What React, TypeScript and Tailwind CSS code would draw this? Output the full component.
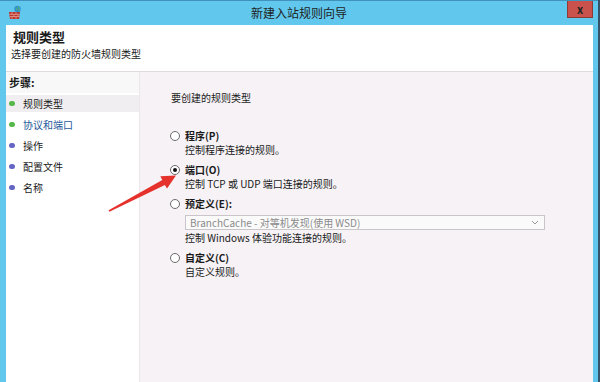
import React from "react";

const steps = [
    { label: "步骤:", header: true },
    { label: "规则类型", dot: "green", active: true },
    { label: "协议和端口", dot: "green", link: true },
    { label: "操作", dot: "purple" },
    { label: "配置文件", dot: "purple" },
    { label: "名称", dot: "purple" },
];

type Option = {
    label: string;
    desc: string;
    checked?: boolean;
    select?: string;
};

const options: Option[] = [
    { label: "程序(P)", desc: "控制程序连接的规则。" },
    { label: "端口(O)", desc: "控制 TCP 或 UDP 端口连接的规则。", checked: true },
    {
        label: "预定义(E):",
        desc: "控制 Windows 体验功能连接的规则。",
        select: "BranchCache - 对等机发现(使用 WSD)",
    },
    { label: "自定义(C)", desc: "自定义规则。" },
];

// firewall icon in the title bar
function WallIcon() {
    return (
        <svg width="14" height="15" viewBox="0 0 14 15">
            <path d="M1 7 L12 7 L11 14 L2 14 Z" fill="#b8332a" />
            <path d="M1.5 9.3 H11.6 M1.8 11.6 H11.3" stroke="#e9a79d" strokeWidth="0.8" />
            <path d="M4 7 V9.3 M8 7 V9.3 M6 9.3 V11.6 M10 9.3 V11.6 M4 11.6 V14 M8 11.6 V14" stroke="#e9a79d" strokeWidth="0.7" />
            <circle cx="9.5" cy="4" r="3.2" fill="#2f8fd0" />
            <path d="M7.8 2.6 Q9 3.6 8.6 5.2 M10.2 1.4 Q11.6 3 10.8 5.8" stroke="#5fc05a" strokeWidth="1" fill="none" />
        </svg>
    );
}

function Radio({ checked }: { checked?: boolean }) {
    return (
        <span className="flex h-[10px] w-[10px] shrink-0 items-center justify-center rounded-full border border-[#6b6b6b] bg-white">
            {checked && <span className="h-[4px] w-[4px] rounded-full bg-[#111]" />}
        </span>
    );
}

function OptionItem({ opt }: { opt: Option }) {
    return (
        <div className="flex flex-col">
            <div className="flex h-[14px] items-center gap-[5px]">
                <Radio checked={opt.checked} />
                <span className="font-bold leading-[14px]">{opt.label}</span>
            </div>
            {opt.select && (
                <div className="mt-[4px] ml-[15px] flex h-[15px] w-[360px] items-center justify-between border border-[#c9c6c9] bg-[#fbfafb] pl-[4px] pr-[5px] text-[#8a8a8a]">
                    <span className="leading-[13px]">{opt.select}</span>
                    <svg width="8" height="5" viewBox="0 0 8 5">
                        <path d="M1 1 L4 4 L7 1" stroke="#9a9a9a" strokeWidth="1" fill="none" />
                    </svg>
                </div>
            )}
            <div className={`${opt.select ? "mt-[1px]" : ""} ml-[15px] h-[14px] leading-[14px]`}>{opt.desc}</div>
        </div>
    );
}

// red annotation arrow drawn over the dialog
function Arrow() {
    return (
        <svg className="pointer-events-none absolute left-0 top-0" width="600" height="382">
            <polygon
                points="108.6,210.2 162.3,180 160.3,176.2 176,175.5 167,188.6 164.9,185 109.4,211.8"
                fill="#e5322c"
            />
        </svg>
    );
}

export default function App() {
    return (
        <div className="relative flex h-[382px] w-[600px] overflow-hidden bg-[#35536a] font-['Noto_Sans_CJK_SC',sans-serif] text-[10px] text-[#1a1a1a]">
            <div className="flex w-[598px] flex-col border-t border-[#3f93bd] bg-[#61c7ec]">
                {/* title bar */}
                <div className="grid h-[24px] grid-cols-[1fr_auto_1fr]">
                    <div className="flex items-center pl-[8px] pb-[2px]">
                        <WallIcon />
                    </div>
                    <div className="flex items-center text-[12px] text-[#1e1e1e]">新建入站规则向导</div>
                    <div className="flex items-start justify-end pr-[5px]">
                        <div className="flex h-[17px] w-[26px] items-center justify-center border border-[#8e3a36] border-t-0 bg-[#c9524c] text-[11px] font-bold leading-none text-[#222]">
                            x
                        </div>
                    </div>
                </div>

                <div className="flex flex-1 flex-col pl-[6px] pr-[5px]">
                    {/* header */}
                    <div className="h-[47px] border-b border-[#dedade] bg-white pt-[4px]">
                        <div className="pl-[7px] text-[13px] font-bold leading-[16px]">规则类型</div>
                        <div className="mt-[3px] pl-[5px] leading-[12px]">选择要创建的防火墙规则类型</div>
                    </div>

                    <div className="flex flex-1">
                        {/* steps */}
                        <div className="w-[134px] border-r border-[#ebe7eb] bg-white">
                            {steps.map((s) =>
                                s.header ? (
                                    <div
                                        key={s.label}
                                        className="flex h-[21px] items-center bg-[#f8f8f8] pl-[3px] text-[11px] font-bold"
                                    >
                                        {s.label}
                                    </div>
                                ) : (
                                    <div key={s.label} className="h-[21px] py-[2px]">
                                        <div
                                            className={`flex h-[17px] items-center gap-[8px] pl-[3px] ${s.active ? "bg-[#f1eef1]" : ""}`}
                                        >
                                            <span
                                                className={`h-[5px] w-[6px] rounded-full ${s.dot === "green" ? "bg-[#56b84a]" : "bg-[#6566c4]"}`}
                                            />
                                            <span className={s.link ? "text-[#1f5a9c]" : ""}>{s.label}</span>
                                        </div>
                                    </div>
                                )
                            )}
                        </div>

                        {/* rule type choices */}
                        <div className="flex-1 bg-[#f6f2f6] pt-[20px]">
                            <div className="pl-[31px] leading-[12px]">要创建的规则类型</div>
                            <div className="mt-[25px] flex flex-col gap-[6px] pl-[30px]">
                                {options.map((o) => (
                                    <OptionItem key={o.label} opt={o} />
                                ))}
                            </div>
                        </div>
                    </div>
                </div>
            </div>
            <div className="w-[2px]" />
            <Arrow />
        </div>
    );
}
